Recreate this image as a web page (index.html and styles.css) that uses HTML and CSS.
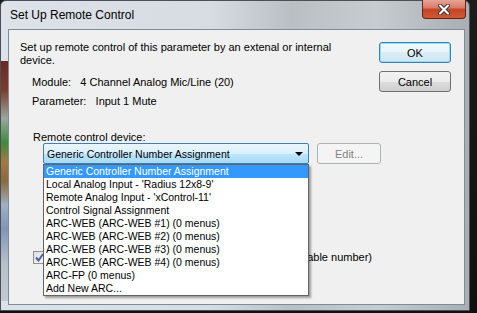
FILE: index.html
```html
<!DOCTYPE html>
<html lang="en">
<head>
    <meta charset="UTF-8">
    <title>Set Up Remote Control</title>
    <link rel="stylesheet" href="styles.css">
</head>
<body>
    <div class="window">
        <div class="titlebar">
            <span class="title">Set Up Remote Control</span>
            <button class="close-btn" aria-label="Close">
                <svg width="12" height="11" viewBox="0 0 12 11">
                    <path d="M2 1.5 L10 9.5 M10 1.5 L2 9.5" stroke="#3b3b3b" stroke-width="4" stroke-linecap="round"/>
                    <path d="M2 1.5 L10 9.5 M10 1.5 L2 9.5" stroke="#fff" stroke-width="2" stroke-linecap="round"/>
                </svg>
            </button>
        </div>

        <div class="client">
            <div class="top">
                <div class="info">
                    <p class="desc">Set up remote control of this parameter by an extenal or internal device.</p>
                    <p class="line">Module:&nbsp;&nbsp; 4 Channel Analog Mic/Line (20)</p>
                    <p class="line">Parameter:&nbsp;&nbsp; Input 1 Mute</p>
                </div>
                <div class="buttons">
                    <button class="btn btn-default">OK</button>
                    <button class="btn">Cancel</button>
                </div>
            </div>

            <div class="device">
                <label class="device-label">Remote control device:</label>
                <div class="device-row">
                    <div class="combo-wrap">
                        <div class="combo">
                            <span>Generic Controller Number Assignment</span>
                            <span class="arrow"></span>
                        </div>
                        <!-- открытый список -->
                        <ul class="dropdown">
                            <li class="selected">Generic Controller Number Assignment</li>
                            <li>Local Analog Input - 'Radius 12x8-9'</li>
                            <li>Remote Analog Input - 'xControl-11'</li>
                            <li>Control Signal Assignment</li>
                            <li>ARC-WEB (ARC-WEB #1) (0 menus)</li>
                            <li>ARC-WEB (ARC-WEB #2) (0 menus)</li>
                            <li>ARC-WEB (ARC-WEB #3) (0 menus)</li>
                            <li>ARC-WEB (ARC-WEB #4) (0 menus)</li>
                            <li>ARC-FP (0 menus)</li>
                            <li>Add New ARC...</li>
                        </ul>
                    </div>
                    <button class="btn btn-edit" disabled>Edit...</button>
                </div>
            </div>

            <div class="check-row">
                <span class="checkbox">
                    <svg width="9" height="9" viewBox="0 0 9 9">
                        <path d="M1 4.5 L3.5 7.5 L8 1" fill="none" stroke="#4b61a0" stroke-width="2"/>
                    </svg>
                </span>
                <span class="check-label">Use the controller number shown below (or first available number)</span>
            </div>
        </div>
    </div>
</body>
</html>
```

FILE: styles.css
```css
body {
    margin: 0;
    width: 477px;
    height: 313px;
    overflow: hidden;
    background: linear-gradient(to bottom, #1b1d1c, #0f100f);
    font-family: 'Liberation Sans', sans-serif;
    font-size: 11px;
    color: #000;
}

.window {
    width: 468px;
    height: 309px;
    border: 1px solid #4a5058;
    border-radius: 6px 6px 0 0;
    background:
        linear-gradient(to bottom, #6a2a24 0, #7c3b2a 12%, #9aa7a0 24%, #3d8a3a 34%, #a47940 42%, #8a6a3a 50%, #9fb0c4 60%, #7f95b7 70%, #b9c2ca 85%, #c2c9cf 100%) left 60px / 7px 240px no-repeat,
        linear-gradient(to right, #dce2e8 0, #d6dce2 45%, #babfc4 62%, #c7ccd1 80%, #a9aeb3 100%);
    display: flex;
    flex-direction: column;
}

.titlebar {
    height: 28px;
    display: flex;
    justify-content: space-between;
    align-items: flex-start;
    padding-left: 9px;
}

.title {
    font-size: 12px;
    line-height: 28px;
    color: #000;
}

.close-btn {
    width: 44px;
    height: 19px;
    margin-top: -1px;
    margin-right: 3px;
    padding: 0;
    border: 1px solid #6b2216;
    border-top: none;
    border-radius: 0 0 4px 4px;
    background: linear-gradient(to bottom, #e6a594 0, #d77a64 45%, #c4442a 50%, #cf5a2f 100%);
    display: flex;
    align-items: center;
    justify-content: center;
}

.client {
    flex: 1;
    margin: 0 4px 5px 7px;
    background-color: #f0f0f0;
    border: 1px solid #7e8b98;
    padding: 11px 13px 0 11px;
    position: relative;
}

p {
    margin: 0;
}

.top {
    display: flex;
    justify-content: space-between;
    align-items: flex-start;
}

.desc {
    width: 320px;
    line-height: 13px;
}

.line {
    margin-left: 12px;
    line-height: 13px;
}

.desc + .line {
    margin-top: 9px;
}

.line + .line {
    margin-top: 6px;
}

.buttons {
    display: flex;
    flex-direction: column;
    gap: 8px;
    margin-top: 1px;
}

.btn {
    width: 72px;
    height: 21px;
    padding: 0;
    border: 1px solid #707070;
    border-radius: 3px;
    background: linear-gradient(to bottom, #f2f2f2 0, #ebebeb 50%, #dddddd 50%, #cfcfcf 100%);
    font-family: 'Liberation Sans', sans-serif;
    font-size: 11px;
    color: #000;
}

.btn-default {
    border-color: #3c7fb1;
    box-shadow: inset 0 0 0 1px #8fe0f8;
    background: linear-gradient(to bottom, #f0f8fd 0, #e8f4fb 50%, #dcecf6 50%, #d0e6f3 100%);
}

.device {
    margin-top: 23px;
    margin-left: 13px;
}

.device-label {
    display: block;
    line-height: 13px;
}

.device-row {
    display: flex;
    gap: 8px;
    margin-left: 10px;
    margin-top: -1px;
}

.combo-wrap {
    position: relative;
}

.combo {
    width: 261px;
    height: 19px;
    border: 1px solid #3c7fb1;
    border-radius: 2px;
    background: linear-gradient(to bottom, #eaf6fd 0, #d9f0fc 50%, #bee6fd 50%, #a7d9f5 100%);
    display: flex;
    align-items: center;
    justify-content: space-between;
    padding-left: 3px;
    font-size: 10.5px;
}

.arrow {
    width: 0;
    height: 0;
    border-left: 4px solid transparent;
    border-right: 4px solid transparent;
    border-top: 4px solid #000;
    margin-right: 5px;
}

.btn-edit {
    width: 64px;
    border-color: #adb2b5;
    background: #f4f4f4;
    color: #838383;
}

.dropdown {
    position: absolute;
    top: 100%;
    left: 0;
    width: 264px;
    margin: 0;
    padding: 0;
    list-style: none;
    background: #fff;
    border: 1px solid #646464;
    box-shadow: 2px 2px 2px rgba(0, 0, 0, 0.35);
    font-size: 10.5px;
    z-index: 2;
}

.dropdown li {
    height: 13px;
    line-height: 13px;
    padding-left: 2px;
    white-space: nowrap;
}

.dropdown li.selected {
    background-color: #3399ff;
    color: #fff;
}

.check-row {
    display: flex;
    align-items: center;
    gap: 5px;
    margin-top: 87px;
    margin-left: 13px;
}

.checkbox {
    width: 11px;
    height: 11px;
    border: 1px solid #8e8f8f;
    background: linear-gradient(135deg, #dcdcdc, #fbfbfb);
    display: flex;
    align-items: center;
    justify-content: center;
}

.check-label {
    white-space: nowrap;
    line-height: 13px;
}
```
